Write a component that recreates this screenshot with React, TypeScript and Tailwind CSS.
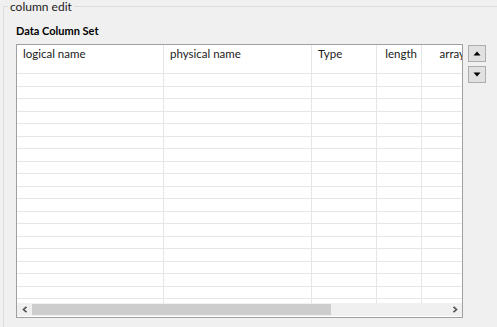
import React from "react";

const cols = [
  { w: 147, label: "logical name", align: "left" },
  { w: 148, label: "physical name", align: "left" },
  { w: 65, label: "Type", align: "left" },
  { w: 45, label: "length", align: "right" },
  { w: 60, label: "array", align: "right" },
];

const rowHeights = [13, 12, 13, 12, 13, 12, 13, 12, 13, 12, 13, 12, 13, 12, 13, 12, 13, 12];

function Cells({ h, last }: { h: number; last?: boolean }) {
  return (
    <div className={`flex shrink-0 ${last ? "" : "border-b border-[#e6e6e6]"}`} style={{ height: h }}>
      {cols.map((c, i) => (
        <div
          key={i}
          className={`shrink-0 h-full ${i < cols.length - 1 ? "border-r border-[#e6e6e6]" : ""}`}
          style={{ width: c.w }}
        />
      ))}
    </div>
  );
}

export default function App() {
  return (
    <div
      className="w-[497px] h-[327px] bg-[#f0f0f0] overflow-hidden text-[#1b1b1b]"
      style={{ fontFamily: 'Lato, "Noto Sans", sans-serif' }}
    >
      <fieldset className="ml-[3px] w-[520px] h-[345px] border border-[#dcdcdc]">
        <legend className="ml-[4px] px-[2px] text-[12px] leading-[13px]">column edit</legend>
        <div className="pl-[12px]">
          <div className="pt-[12px] text-[11px] leading-[12px] font-bold text-black">Data Column Set</div>
          <div className="flex mt-[7px] gap-[5px]">
            {/* table */}
            <div className="w-[447px] h-[274px] border border-[#a0a0a0] bg-white flex flex-col overflow-hidden">
              {/* header */}
              <div className="flex shrink-0 h-[29px] border-b border-[#e6e6e6]">
                {cols.map((c, i) => (
                  <div
                    key={i}
                    className={`shrink-0 h-full pt-[2px] text-[11.5px] leading-[14px] whitespace-nowrap overflow-hidden ${
                      i < cols.length - 1 ? "border-r border-[#e6e6e6]" : ""
                    } ${c.align === "right" ? "text-right pr-[4px]" : "pl-[6px]"}`}
                    style={{ width: c.w, paddingRight: i === 4 ? 17 : undefined }}
                  >
                    {c.label}
                  </div>
                ))}
              </div>
              {rowHeights.map((h, i) => (
                <Cells key={i} h={h} />
              ))}
              <Cells h={4} last />
              {/* horizontal scrollbar */}
              <div className="flex h-[13px] shrink-0 bg-[#f0f0f0] items-stretch">
                <div className="w-[15px] flex items-center justify-center">
                  <svg width="6" height="7" viewBox="0 0 6 7">
                    <path d="M4.5 0.8 L1.5 3.5 L4.5 6.2" fill="none" stroke="#505050" strokeWidth="1.6" />
                  </svg>
                </div>
                <div className="w-[299px] bg-[#cdcdcd] my-[1px]" />
                <div className="flex-1" />
                <div className="w-[15px] flex items-center justify-center">
                  <svg width="6" height="7" viewBox="0 0 6 7">
                    <path d="M1.5 0.8 L4.5 3.5 L1.5 6.2" fill="none" stroke="#505050" strokeWidth="1.6" />
                  </svg>
                </div>
              </div>
            </div>
            {/* up/down buttons */}
            <div className="flex flex-col gap-[4px] pt-[1px]">
              <button className="w-[18px] h-[17px] bg-[#e1e1e1] border border-[#adadad] flex items-center justify-center">
                <svg width="8" height="5" viewBox="0 0 8 5">
                  <path d="M0.5 4.5 L4 0.5 L7.5 4.5 Z" fill="#000" />
                </svg>
              </button>
              <button className="w-[18px] h-[17px] bg-[#e1e1e1] border border-[#adadad] flex items-center justify-center">
                <svg width="8" height="5" viewBox="0 0 8 5">
                  <path d="M0.5 0.5 L4 4.5 L7.5 0.5 Z" fill="#000" />
                </svg>
              </button>
            </div>
          </div>
        </div>
      </fieldset>
    </div>
  );
}
